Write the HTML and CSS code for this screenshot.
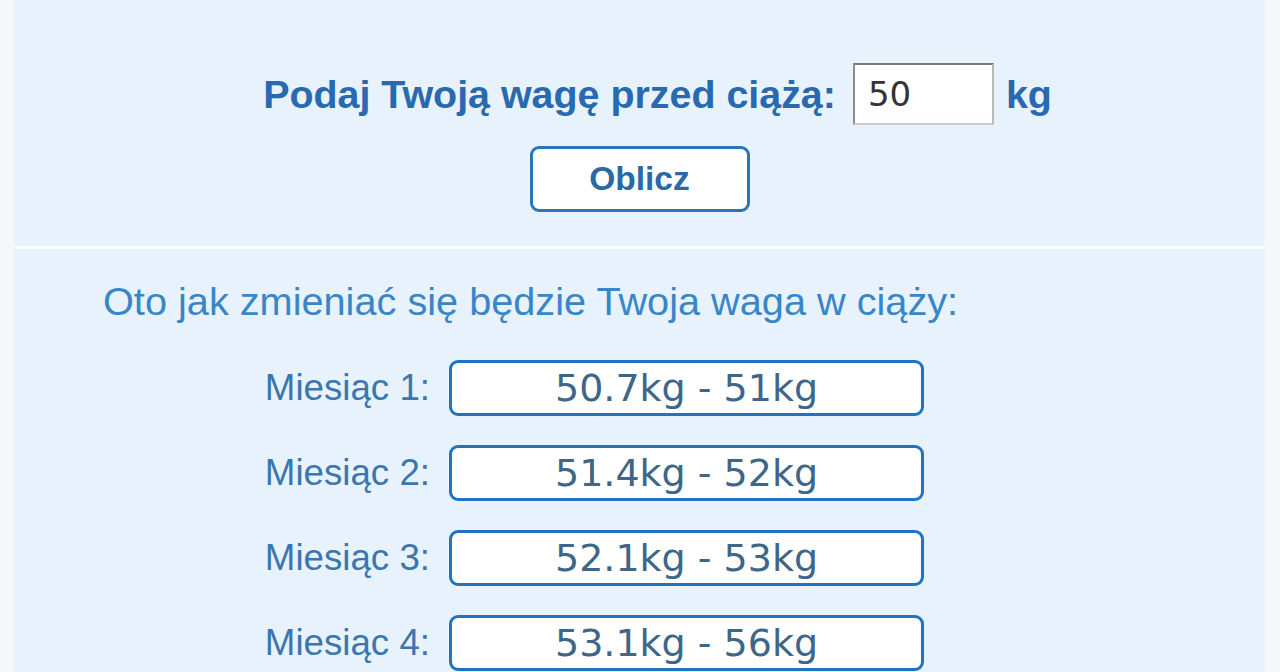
FILE: index.html
```html
<!DOCTYPE html>
<html lang="pl">
<head>
<meta charset="utf-8">
<title>Kalkulator wagi w ciąży</title>
<link rel="stylesheet" href="styles.css">
</head>
<body>
<div class="page">
  <form class="calc">
    <div class="weight-row">
      <label class="weight-label" for="waga">Podaj Twoją wagę przed ciążą:</label>
      <input class="weight-input" id="waga" type="text" value="50">
      <span class="unit">kg</span>
    </div>
    <button class="calc-btn" type="button">Oblicz</button>
  </form>
  <div class="divider"></div>
  <section class="results">
    <p class="intro">Oto jak zmieniać się będzie Twoja waga w ciąży:</p>
    <div class="months">
      <span class="month-label">Miesiąc 1:</span>
      <div class="month-value">50.7kg - 51kg</div>
      <span class="month-label">Miesiąc 2:</span>
      <div class="month-value">51.4kg - 52kg</div>
      <span class="month-label">Miesiąc 3:</span>
      <div class="month-value">52.1kg - 53kg</div>
      <span class="month-label">Miesiąc 4:</span>
      <div class="month-value">53.1kg - 56kg</div>
    </div>
  </section>
</div>
</body>
</html>
```
FILE: styles.css
```css
html, body {
  margin: 0;
  background: #f5f7f9;
  font-family: "Liberation Sans", Arial, sans-serif;
}

.page {
  margin: 0 15px 0 14px;
  background: #e7f2fc;
  min-height: 672px;
}

/* weight form */
.calc {
  box-sizing: border-box;
  height: 246px;
  padding-top: 63px;
  margin: 0;
  display: flex;
  flex-direction: column;
  align-items: center;
}

.weight-row {
  display: flex;
  align-items: center;
  padding-left: 36px;
}

.weight-label {
  font-weight: bold;
  font-size: 39.4px;
  color: #2869b0;
  margin-right: 17px;
}

.weight-input {
  box-sizing: border-box;
  width: 141px;
  height: 62px;
  padding: 0 0 0 13px;
  border-style: solid;
  border-width: 2px;
  border-color: #7b7b7b #b9b9b9 #c9c9c9 #8c8c8c;
  background: #fff;
  font-family: "DejaVu Sans", Verdana, sans-serif;
  font-size: 34px;
  color: #333;
  outline: none;
}

.unit {
  margin-left: 12px;
  font-weight: bold;
  font-size: 39.4px;
  color: #2869b0;
}

.calc-btn {
  box-sizing: border-box;
  margin-top: 21px;
  width: 220px;
  height: 66px;
  border: 3px solid #2875b8;
  border-radius: 9px;
  background: #fff;
  font-family: "Liberation Sans", Arial, sans-serif;
  font-weight: bold;
  font-size: 33.5px;
  color: #2a69a3;
  padding: 0;
}

.divider {
  height: 3px;
  background: #f8fcff;
}

/* results list */
.results {
  padding: 33px 0 0 89px;
}

.intro {
  margin: 0;
  font-size: 39.7px;
  line-height: 39px;
  color: #3886c8;
}

.months {
  display: grid;
  grid-template-columns: 327px 475px;
  column-gap: 19px;
  row-gap: 29px;
  margin-top: 39px;
  align-items: center;
}

.month-label {
  text-align: right;
  font-size: 36.7px;
  color: #3a76b0;
}

.month-value {
  box-sizing: border-box;
  height: 56px;
  border: 3px solid #1f73c0;
  border-radius: 9px;
  background: #fff;
  display: flex;
  align-items: center;
  justify-content: center;
  font-family: "DejaVu Sans", Verdana, sans-serif;
  font-size: 38px;
  color: #3d6688;
}
```
